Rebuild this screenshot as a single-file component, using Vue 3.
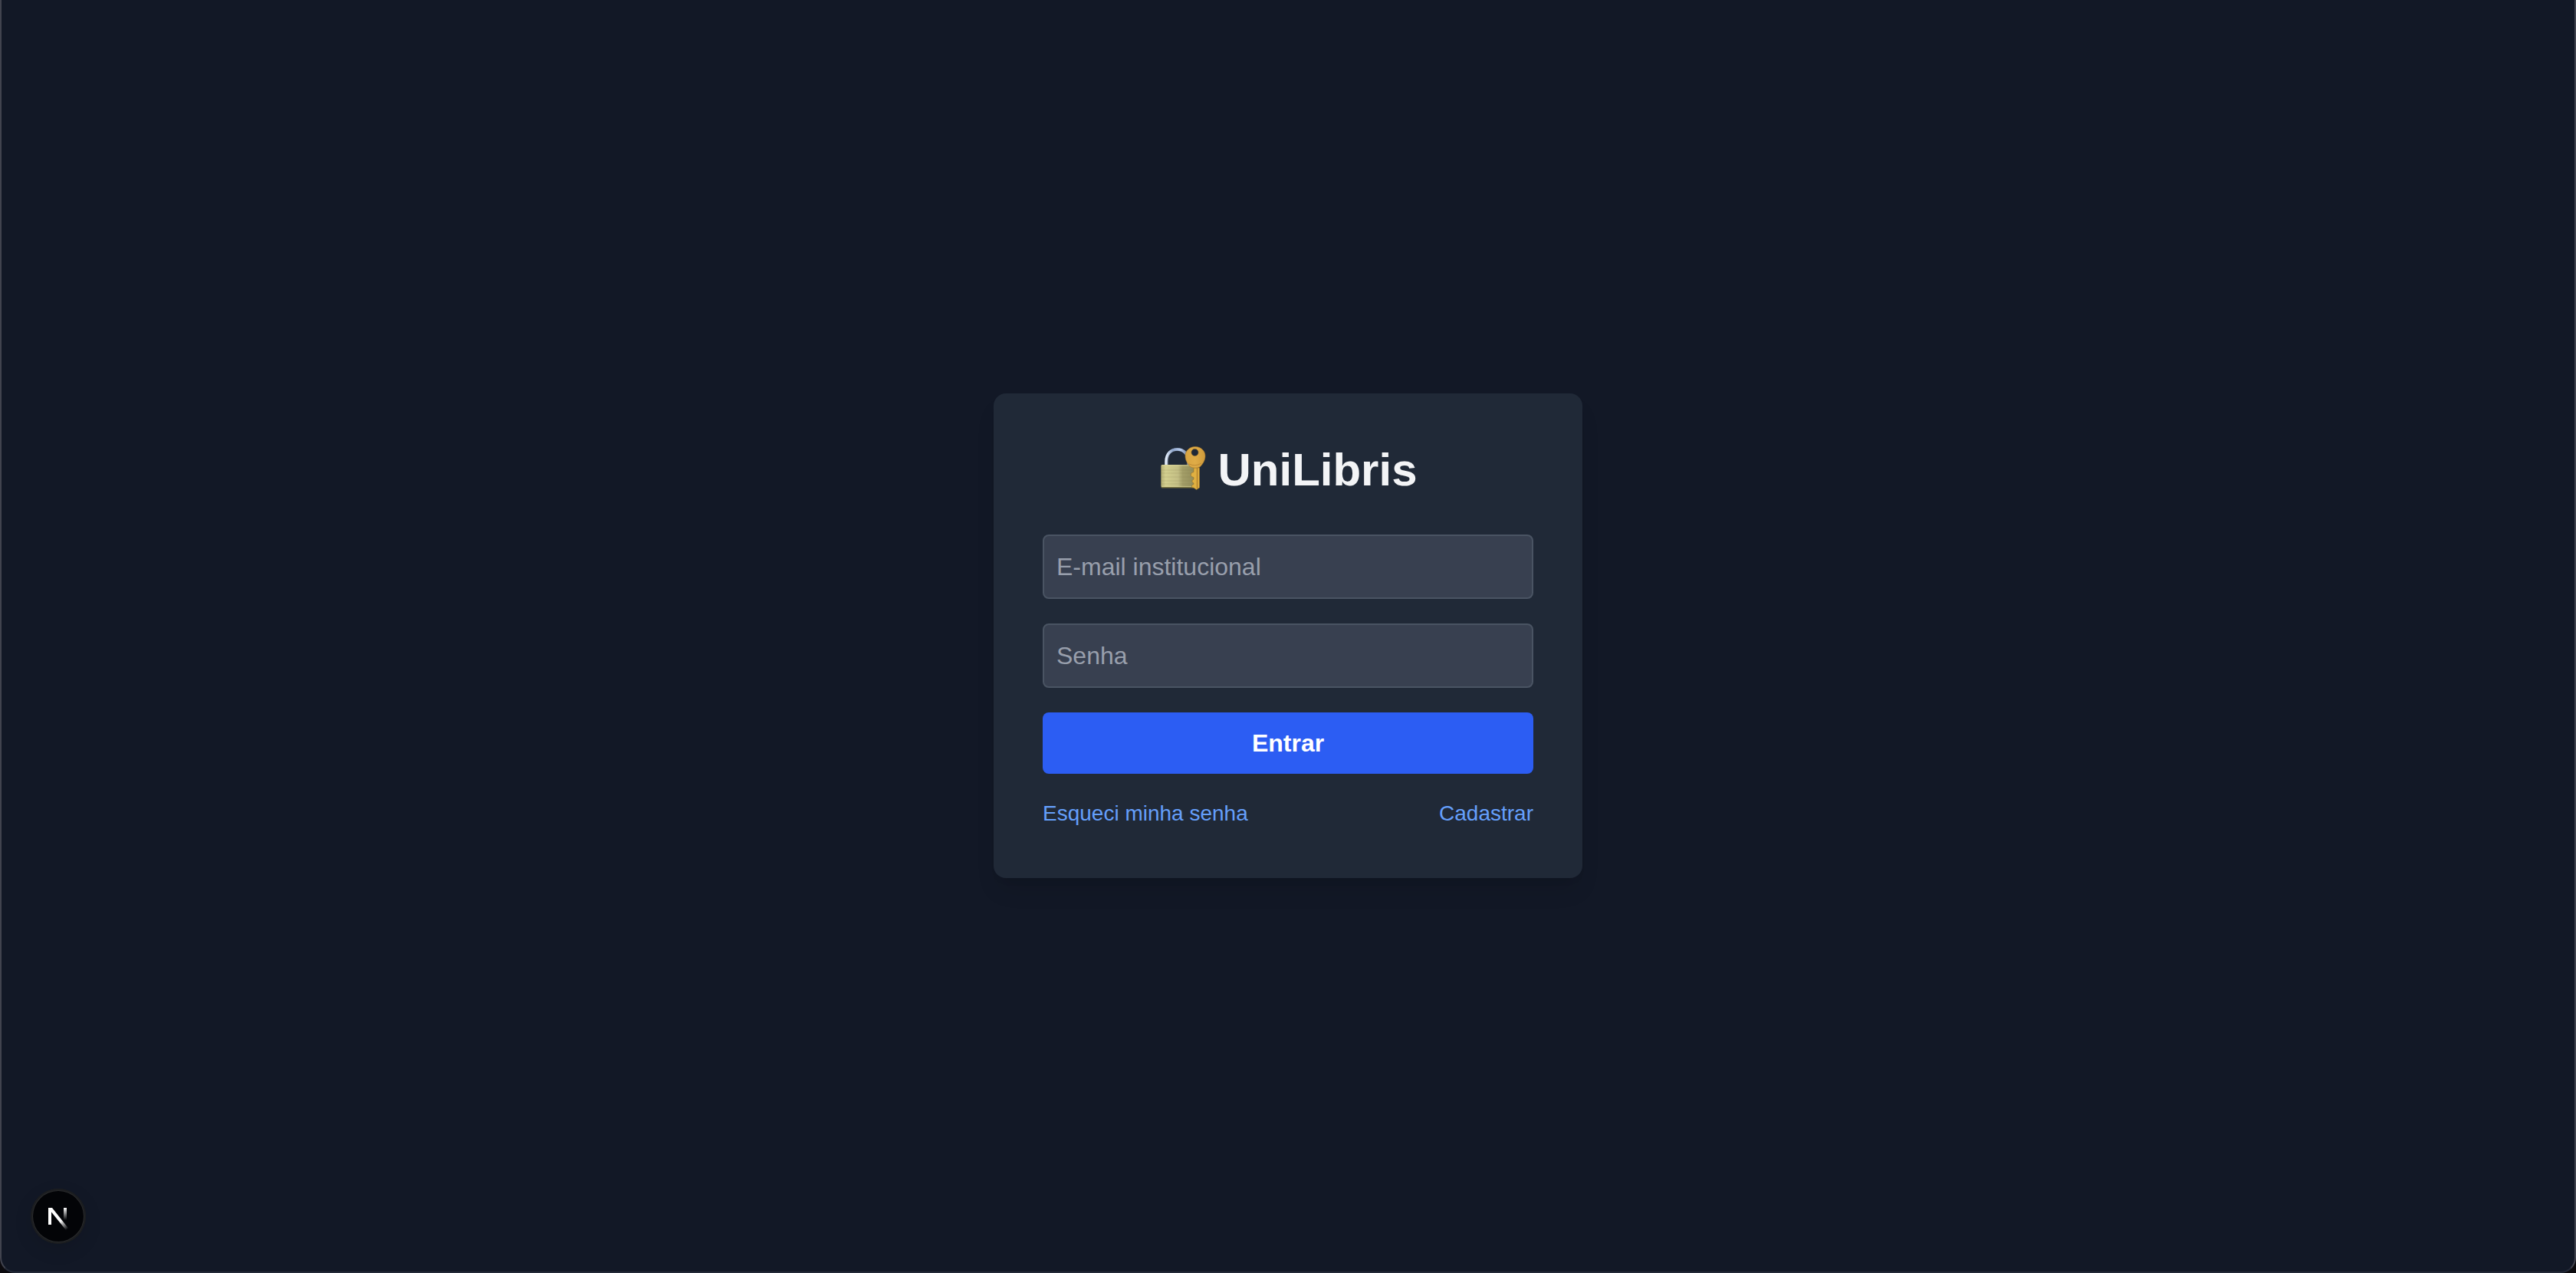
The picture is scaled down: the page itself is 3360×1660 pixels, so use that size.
<script setup>
import { ref } from 'vue'

const email = ref('')
const password = ref('')
</script>

<template>
  <div class="window">
    <main class="page">
      <section class="card">
        <h1 class="title">
          <svg class="lock" viewBox="0 3 60 60" aria-hidden="true">
            <defs>
              <linearGradient id="brass" x1="0" x2="1" y1="0" y2="0">
                <stop offset="0" stop-color="#b5b075" />
                <stop offset=".12" stop-color="#d3cf8f" />
                <stop offset=".45" stop-color="#c3be84" />
                <stop offset=".58" stop-color="#a39e68" />
                <stop offset="1" stop-color="#8d8756" />
              </linearGradient>
              <linearGradient id="steel" x1="0" x2="1" y1="0" y2="0">
                <stop offset="0" stop-color="#e4edfb" />
                <stop offset=".3" stop-color="#8ea5cb" />
                <stop offset=".65" stop-color="#b8cdf0" />
                <stop offset="1" stop-color="#6c7890" />
              </linearGradient>
              <linearGradient id="gold" x1="0" x2="1" y1="0" y2="0">
                <stop offset="0" stop-color="#d9a441" />
                <stop offset=".5" stop-color="#dfac47" />
                <stop offset="1" stop-color="#cf9a3b" />
              </linearGradient>
            </defs>
            <path d="M11 31V22C11 11 17 6 24.500 6S39 11 39 22V31" fill="none" stroke="#5b6475" stroke-width="4" />
            <path d="M10 31V22C10 11 17 6 24.500 6S39 11 39 22V31" fill="none" stroke="url(#steel)" stroke-width="3.500" />
            <rect x="3.500" y="26" width="48.500" height="30.500" rx="1.500" fill="#77713f" />
            <rect x="3.500" y="26" width="48.500" height="29" rx="1.500" fill="url(#brass)" />
            <path d="M4 27H51" stroke="#e5dfa8" stroke-opacity=".6" />
            <path d="M4 33H50M4 37H50M4 42H50M4 47H50M4 51H50" stroke="#787441" stroke-opacity=".18" />
            <path d="M4 54.500H50" stroke="#e4dea0" stroke-opacity=".5" />
            <path d="M46 30V35.500L43.500 36.500C42 38 42 40.500 43.500 41.500L46 42.500V45L44 46.500V48.500L46 50V51.500L43.500 53V55.500L46 56L49.500 58.500L53.500 56V30Z" fill="#e0b041" stroke="#977127" stroke-width=".6" />
            <path d="M50.500 30V57" stroke="#b07d2b" stroke-width="1.300" />
            <path fill-rule="evenodd" d="M48 2.500C40 2.500 35 8.500 35 14.500C35 20 38 25 41.500 28.500C44 30.500 52 30.500 54.500 28.500C58 25 61 20 61 14.500C61 8.500 56 2.500 48 2.500ZM47.500 5.300A4.700 4.700 0 1 1 47.500 14.700A4.700 4.700 0 1 1 47.500 5.300Z" fill="url(#gold)" stroke="#a87a2e" stroke-width=".6" />
            <path d="M40 25Q48 29 56 24" fill="none" stroke="#b8812e" stroke-width=".8" />
          </svg>
          <span>UniLibris</span>
        </h1>
        <form class="form" @submit.prevent>
          <input v-model="email" class="field" type="email" placeholder="E-mail institucional" aria-label="E-mail institucional" />
          <input v-model="password" class="field" type="password" placeholder="Senha" aria-label="Senha" />
          <button class="submit" type="submit">Entrar</button>
        </form>
        <nav class="links">
          <a href="#recuperar">Esqueci minha senha</a>
          <a href="#cadastro">Cadastrar</a>
        </nav>
      </section>
    </main>
    <button class="badge" type="button" aria-label="Next.js">
      <svg viewBox="0 0 72 72" aria-hidden="true">
        <defs>
          <linearGradient id="diagonal" gradientUnits="userSpaceOnUse" x1="39" y1="42" x2="48" y2="53">
            <stop offset="0" stop-color="#fff" />
            <stop offset="1" stop-color="#fff" stop-opacity="0" />
          </linearGradient>
          <linearGradient id="stem" gradientUnits="userSpaceOnUse" x1="0" y1="25" x2="0" y2="41">
            <stop offset="0" stop-color="#fff" />
            <stop offset="1" stop-color="#fff" stop-opacity="0" />
          </linearGradient>
        </defs>
        <path d="M23 25H28L49 51.500L46 54L27 30.500V47H23Z" fill="url(#diagonal)" />
        <path d="M43 25H47V41H43Z" fill="url(#stem)" />
      </svg>
    </button>
  </div>
</template>

<style>
body {
  margin: 0;
  background: #0c0b0f;
}
</style>

<style scoped>
.window {
  box-sizing: border-box;
  min-height: 100vh;
  display: flex;
  border: 2px solid #41434e;
  border-top: 0;
  border-bottom-color: #242a38;
  border-radius: 0 0 20px 20px;
  background: #121826;
  font-family: "Liberation Sans", Arial, Helvetica, sans-serif;
}

.page {
  flex: 1;
  display: flex;
  align-items: center;
  justify-content: center;
}

.card {
  box-sizing: border-box;
  width: 100%;
  max-width: 768px;
  padding: 64px;
  border-radius: 16px;
  background: #202937;
  box-shadow: 0 20px 30px -6px rgba(0, 0, 0, 0.1), 0 8px 12px -8px rgba(0, 0, 0, 0.1);
}

.title {
  display: flex;
  align-items: center;
  justify-content: center;
  gap: 17px;
  margin: 0 0 48px;
  color: #f3f4f6;
  font-size: 60px;
  font-weight: 700;
  line-height: 72px;
}

.lock {
  width: 60px;
  height: 60px;
  overflow: visible;
}

.form {
  display: flex;
  flex-direction: column;
  gap: 32px;
}

.field {
  box-sizing: border-box;
  width: 100%;
  height: 84px;
  padding: 16px;
  border: 2px solid #4a5463;
  border-radius: 8px;
  outline: 0;
  background: #384050;
  color: #f3f4f6;
  font: inherit;
  font-size: 32px;
  line-height: 48px;
}

.field::placeholder {
  color: #989fac;
  opacity: 1;
}

.submit {
  padding: 16px;
  border: 0;
  border-radius: 8px;
  background: #2c5df3;
  color: #fff;
  font: inherit;
  font-size: 32px;
  font-weight: 700;
  line-height: 48px;
  cursor: pointer;
}

.links {
  display: flex;
  justify-content: space-between;
  margin-top: 32px;
  font-size: 28px;
  line-height: 40px;
}

.links a {
  color: #659ffb;
  text-decoration: none;
}

.links a:hover {
  text-decoration: underline;
}

.badge {
  position: fixed;
  bottom: 38px;
  left: 40px;
  width: 72px;
  height: 72px;
  padding: 0;
  border: 0;
  border-radius: 50%;
  background: #030407;
  box-shadow: inset 0 0 0 2px #1b1d20, inset 0 0 0 3px #2a2b2d, 0 8px 24px rgba(0, 0, 0, 0.1);
}

.badge svg {
  display: block;
  width: 72px;
  height: 72px;
}
</style>
